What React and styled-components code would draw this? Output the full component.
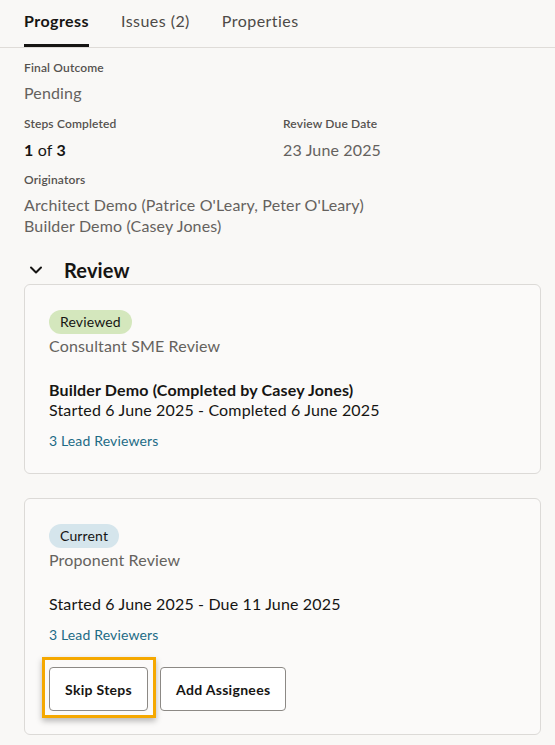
import React from "react";
import styled, { createGlobalStyle } from "styled-components";

const GlobalStyle = createGlobalStyle`
  html, body {
    margin: 0;
    padding: 0;
    background: #f9f8f6;
  }
  body {
    font-family: Lato, "Noto Sans", Arial, sans-serif;
    color: #161513;
    letter-spacing: 0.15px;
  }
`;

const Page = styled.div`
  width: 555px;
  min-height: 745px;
  background: #f9f8f6;
`;

const TabBar = styled.div`
  display: flex;
  gap: 32px;
  padding: 0 24px;
  border-bottom: 1px solid #dfdcd8;
`;

const Tab = styled.div`
  font-size: 16px;
  line-height: 20px;
  letter-spacing: 0.45px;
  padding: 11px 0 13px;
  font-weight: ${(p) => (p.$active ? 700 : 400)};
  color: ${(p) => (p.$active ? "#161513" : "#4d4a47")};
  border-bottom: 3px solid ${(p) => (p.$active ? "#161513" : "transparent")};
`;

const Body = styled.div`
  padding: 12px 14px 0 24px;
`;

const Field = styled.div`
  display: flex;
  flex-direction: column;
  gap: ${(p) => p.$gap || 5}px;
  margin-bottom: ${(p) => p.$mb || 0}px;
`;

const Label = styled.div`
  font-size: 12px;
  line-height: 16px;
  font-weight: 600;
  color: #55524f;
`;

const Value = styled.div`
  font-size: 16px;
  line-height: ${(p) => p.$lh || 24}px;
  color: ${(p) => (p.$dark ? "#161513" : "#65625e")};

  b {
    font-weight: 700;
  }
`;

const Columns = styled.div`
  display: grid;
  grid-template-columns: 259px 1fr;
  margin-bottom: 10px;
`;

const SectionHeader = styled.div`
  display: flex;
  align-items: center;
  height: 28px;
  margin-top: 20px;
  padding-left: 5px;
  gap: 21px;
`;

const SectionTitle = styled.h2`
  margin: 0;
  font-size: 20px;
  line-height: 28px;
  font-weight: 700;
`;

const Card = styled.div`
  display: flex;
  flex-direction: column;
  align-items: flex-start;
  background: #fbfaf9;
  border: 1px solid #dcdad7;
  border-radius: 6px;
  padding: 25px 24px ${(p) => p.$pb || 22}px;
  margin-bottom: 24px;
`;

const Badge = styled.span`
  display: inline-block;
  font-size: 14px;
  line-height: 24px;
  padding: 0 11px;
  border-radius: 12px;
  color: #161513;
  background: ${(p) => (p.$tone === "green" ? "#d4e7bd" : "#d5e5ec")};
`;

const StepName = styled.div`
  font-size: 16px;
  line-height: 24px;
  color: #65625e;
  margin-bottom: 22px;
`;

const Line = styled.div`
  font-size: 16px;
  line-height: 20px;
  font-weight: ${(p) => (p.$bold ? 700 : 400)};
  color: #161513;
`;

const Link = styled.a`
  font-size: 14px;
  line-height: 20px;
  margin-top: 11px;
  color: #1d6b86;
  text-decoration: none;
`;

const Actions = styled.div`
  display: flex;
  gap: 12px;
  margin-top: 22px;
`;

const Button = styled.button`
  position: relative;
  height: 44px;
  padding: 0 15px;
  font-family: inherit;
  font-size: 14px;
  font-weight: 700;
  letter-spacing: 0.3px;
  color: #161513;
  background: #fff;
  border: 1px solid #8c8985;
  border-radius: 4px;

  ${(p) =>
    p.$focused &&
    `
    &::after {
      content: "";
      position: absolute;
      top: -11px;
      left: -8px;
      right: -9px;
      bottom: -8px;
      border: 3px solid #f5a800;
      box-shadow: 0 3px 6px rgba(0, 0, 0, 0.28);
      pointer-events: none;
    }
  `}
`;

const Chevron = () => (
  <svg width="14" height="14" viewBox="0 0 14 14" fill="none">
    <path
      d="M2 4.5 L7 9.5 L12 4.5"
      stroke="#161513"
      strokeWidth="2"
      strokeLinecap="round"
      strokeLinejoin="round"
    />
  </svg>
);

export default function App() {
  return (
    <Page>
      <GlobalStyle />
      <TabBar>
        <Tab $active>Progress</Tab>
        <Tab>Issues (2)</Tab>
        <Tab>Properties</Tab>
      </TabBar>
      <Body>
        <Field $mb={11}>
          <Label>Final Outcome</Label>
          <Value>Pending</Value>
        </Field>
        <Columns>
          <Field $gap={6}>
            <Label>Steps Completed</Label>
            <Value $dark>
              <b>1</b> of <b>3</b>
            </Value>
          </Field>
          <Field $gap={6}>
            <Label>Review Due Date</Label>
            <Value>23 June 2025</Value>
          </Field>
        </Columns>
        <Field $gap={6}>
          <Label>Originators</Label>
          <div>
            <Value $lh={21}>Architect Demo (Patrice O'Leary, Peter O'Leary)</Value>
            <Value $lh={21}>Builder Demo (Casey Jones)</Value>
          </div>
        </Field>

        <SectionHeader>
          <Chevron />
          <SectionTitle>Review</SectionTitle>
        </SectionHeader>

        <Card>
          <Badge $tone="green">Reviewed</Badge>
          <StepName>Consultant SME Review</StepName>
          <Line $bold>Builder Demo (Completed by Casey Jones)</Line>
          <Line>Started 6 June 2025 - Completed 6 June 2025</Line>
          <Link href="#">3 Lead Reviewers</Link>
        </Card>

        <Card $pb={23}>
          <Badge>Current</Badge>
          <StepName>Proponent Review</StepName>
          <Line>Started 6 June 2025 - Due 11 June 2025</Line>
          <Link href="#">3 Lead Reviewers</Link>
          <Actions>
            <Button $focused>Skip Steps</Button>
            <Button>Add Assignees</Button>
          </Actions>
        </Card>
      </Body>
    </Page>
  );
}
